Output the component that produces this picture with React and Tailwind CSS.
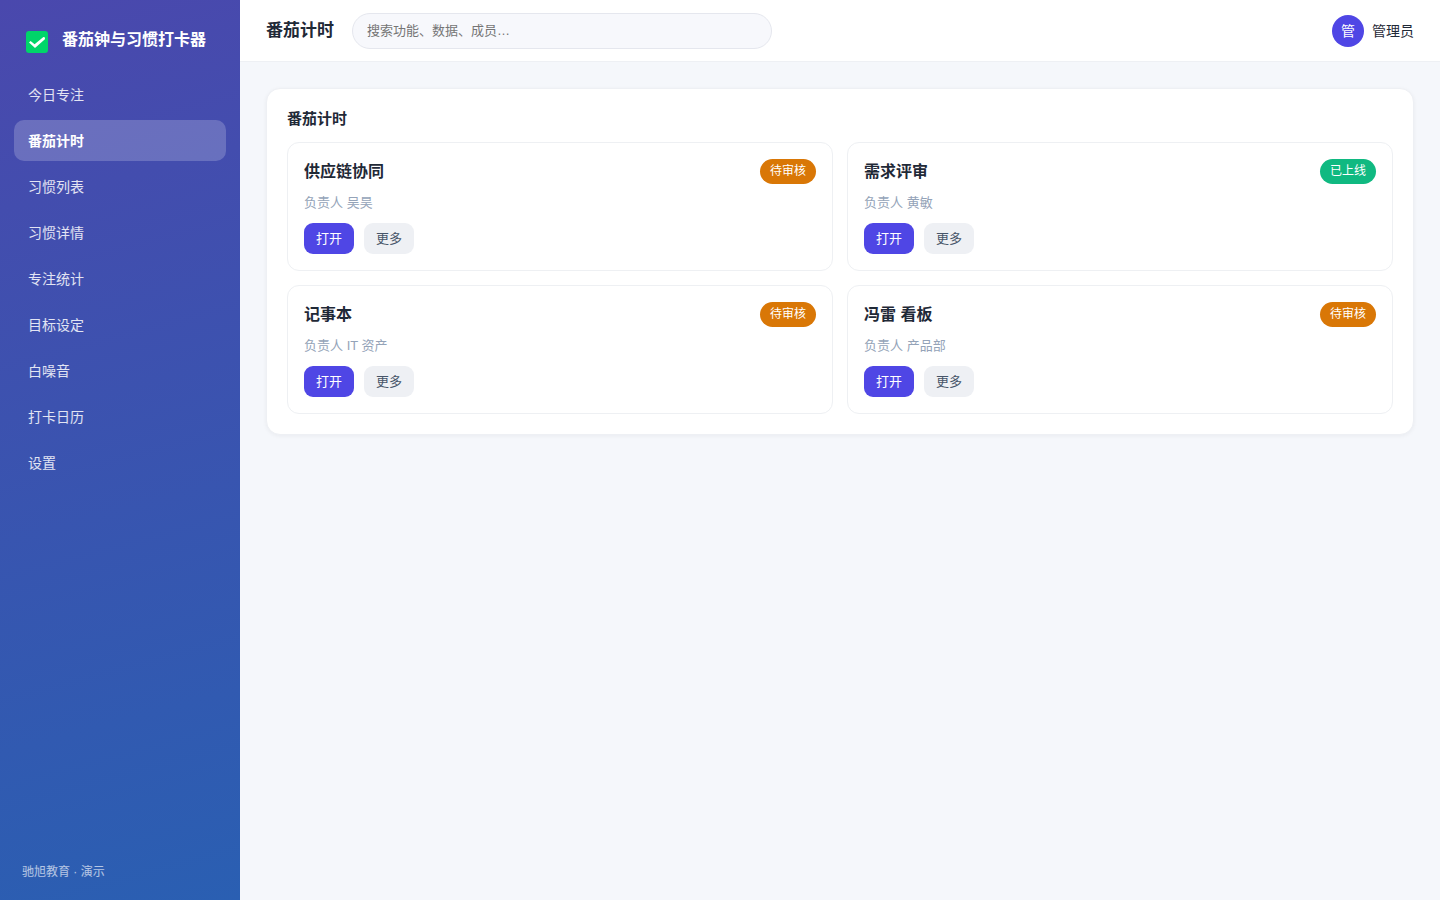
const NAV_ITEMS = [
  "今日专注",
  "番茄计时",
  "习惯列表",
  "习惯详情",
  "专注统计",
  "目标设定",
  "白噪音",
  "打卡日历",
  "设置",
];

const CARDS = [
  { title: "供应链协同", owner: "吴昊", status: "待审核" },
  { title: "需求评审", owner: "黄敏", status: "已上线" },
  { title: "记事本", owner: "IT 资产", status: "待审核" },
  { title: "冯雷 看板", owner: "产品部", status: "待审核" },
];

const STATUS_COLORS = {
  待审核: "bg-[#d97706]",
  已上线: "bg-[#10b981]",
};

function Logo() {
  return (
    <svg viewBox="0 0 22 22" className="mt-1 size-[22px] shrink-0" aria-hidden="true">
      <rect width="22" height="22" rx="3" fill="#00d569" />
      <path
        d="M3 11.4 L4.6 9.9 L8.6 13.3 L17.4 5.9 L19 6.4 L18.9 8.2 L9 17 Z"
        fill="#fff"
      />
    </svg>
  );
}

function Sidebar({ active }) {
  return (
    <aside className="flex w-60 shrink-0 flex-col bg-[linear-gradient(165deg,#4a48ad,#2a5fb2)] px-3.5 text-white">
      <div className="flex h-[74px] items-center gap-3.5 px-3 pt-1.5">
        <Logo />
        <span className="text-base font-bold whitespace-nowrap">番茄钟与习惯打卡器</span>
      </div>
      <nav className="flex flex-col gap-[5px]">
        {NAV_ITEMS.map((item) => (
          <a
            key={item}
            href="#"
            className={`flex h-[41px] items-center rounded-[10px] px-3.5 text-sm ${
              item === active ? "bg-white/20 font-bold" : "text-white/85"
            }`}
          >
            {item}
          </a>
        ))}
      </nav>
      <div className="mt-auto px-2 pb-5 text-xs leading-4 text-white/65">驰旭教育 · 演示</div>
    </aside>
  );
}

function Header({ title }) {
  return (
    <header className="flex h-[62px] shrink-0 items-center gap-[18px] border-b border-[#eef0f4] bg-white px-[26px]">
      <h1 className="text-[17px] font-bold whitespace-nowrap">{title}</h1>
      <input
        type="search"
        aria-label="搜索"
        placeholder="搜索功能、数据、成员…"
        className="h-9 w-full max-w-[420px] rounded-full border border-[#e5e7ee] bg-[#f7f8fc] px-3.5 text-[13px] outline-none placeholder:text-[#757575]"
      />
      <div className="ml-auto flex items-center gap-2 text-sm whitespace-nowrap">
        <span className="flex size-8 items-center justify-center rounded-full bg-[#4f46e5] text-sm text-white">
          管
        </span>
        <span>管理员</span>
      </div>
    </header>
  );
}

function Card({ title, owner, status }) {
  return (
    <article className="rounded-xl border border-[#eef0f3] p-4">
      <div className="flex items-center justify-between">
        <h3 className="text-base leading-[25px] font-bold">{title}</h3>
        <span
          className={`rounded-full px-2.5 text-xs leading-[25px] text-white ${STATUS_COLORS[status]}`}
        >
          {status}
        </span>
      </div>
      <p className="mt-2 text-[13px] leading-[21px] text-[#94a3b8]">负责人 {owner}</p>
      <div className="mt-2.5 flex gap-2.5 text-[13px]">
        <button className="h-[31px] rounded-[9px] bg-[#4f46e5] px-3 text-white">打开</button>
        <button className="h-[31px] rounded-[9px] bg-[#eef0f4] px-3 text-[#475569]">更多</button>
      </div>
    </article>
  );
}

export default function App() {
  const page = "番茄计时";

  return (
    <div className="flex min-h-screen bg-[#f5f7fb] font-['Liberation_Sans','Noto_Sans_CJK_SC',sans-serif] text-[#1f2937]">
      <Sidebar active={page} />
      <div className="flex min-w-0 flex-1 flex-col">
        <Header title={page} />
        <main className="p-[26px]">
          <section className="rounded-[14px] border border-[#eef0f4] bg-white p-5 shadow-[0_1px_4px_rgba(15,23,42,0.05)]">
            <h2 className="mb-[13px] text-[15px] leading-5 font-bold">{page}</h2>
            <div className="grid grid-cols-2 gap-3.5">
              {CARDS.map((card) => (
                <Card key={card.title} {...card} />
              ))}
            </div>
          </section>
        </main>
      </div>
    </div>
  );
}
